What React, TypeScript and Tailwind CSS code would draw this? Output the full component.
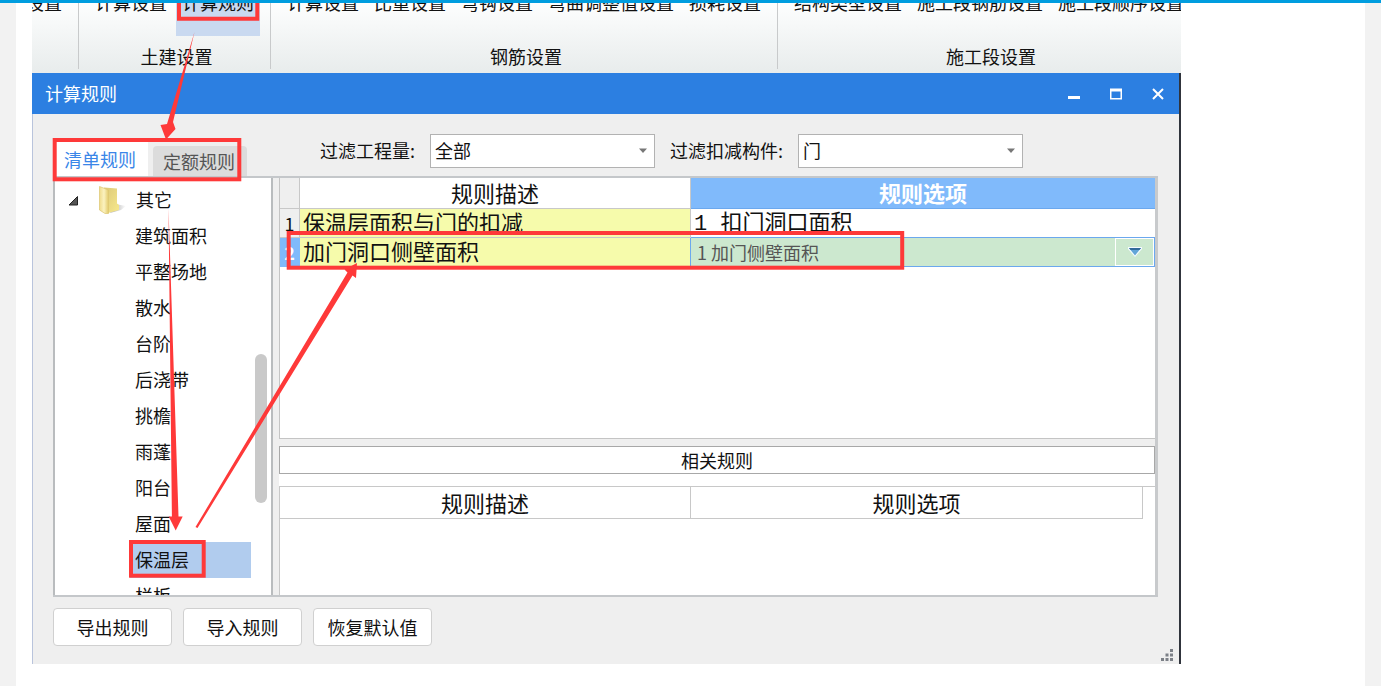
import { useState } from "react";

const ribbonGroups = [
  { label: "", items: ["设置"] },
  { label: "土建设置", items: ["计算设置", "计算规则"] },
  {
    label: "钢筋设置",
    items: ["计算设置", "比重设置", "弯钩设置", "弯曲调整值设置", "损耗设置"],
  },
  {
    label: "施工段设置",
    items: ["结构类型设置", "施工段钢筋设置", "施工段顺序设置"],
  },
];

const treeItems = [
  "建筑面积",
  "平整场地",
  "散水",
  "台阶",
  "后浇带",
  "挑檐",
  "雨蓬",
  "阳台",
  "屋面",
  "保温层",
  "栏板",
];

const Ribbon = () => (
  <div className="flex h-[70px] overflow-hidden bg-gradient-to-b from-[#fdfefe] to-[#e8ecec]">
    {ribbonGroups.map((group, index) => (
      <div
        key={index}
        className={`flex shrink-0 flex-col ${index === 0 ? "w-[47px]" : ""}`}
      >
        <div className="flex h-[66px]">
          <div className={index === 0 ? "-ml-3" : "px-[10px]"}>
            <div className="flex h-[33px] items-end gap-[3px] overflow-hidden">
              {group.items.map((item) => (
                <button
                  key={item}
                  type="button"
                  className={`flex h-[46px] shrink-0 items-start px-[6px] leading-6 whitespace-nowrap ${
                    item === "计算规则" ? "bg-[#c9d9f0]" : ""
                  }`}
                >
                  {item}
                </button>
              ))}
            </div>
            <div className="mt-2 pl-1 text-center leading-6">{group.label}</div>
          </div>
          {index < 3 && <div className="ml-auto w-px bg-[#c8cacb]" />}
        </div>
      </div>
    ))}
  </div>
);

const TitleBar = () => (
  <div className="flex h-[41px] items-center bg-[#2c7fe1] pl-[13px] text-white">
    <h1 className="flex-1 pb-[2px]">计算规则</h1>
    <button type="button" aria-label="最小化" className="flex h-full w-[42px] items-center justify-center">
      <svg width="12" height="12" viewBox="0 0 12 12">
        <path d="M0 8h12v3H0z" fill="white" />
      </svg>
    </button>
    <button type="button" aria-label="最大化" className="flex h-full w-[42px] items-center justify-center">
      <svg width="12" height="12" viewBox="0 0 12 12">
        <path d="M0 0.500h12v11H0zM1.500 3.500v6.500h9V3.500z" fill="white" fillRule="evenodd" />
      </svg>
    </button>
    <button type="button" aria-label="关闭" className="flex h-full w-[42px] items-center justify-center">
      <svg width="12" height="12" viewBox="0 0 12 12">
        <path d="M1 1l10 10M11 1L1 11" stroke="white" strokeWidth="2" />
      </svg>
    </button>
  </div>
);

const FilterSelect = ({ id, label, options }: { id: string; label: string; options: string[] }) => (
  <div className="flex items-center gap-[15px]">
    <label htmlFor={id} className="pb-[2px] whitespace-nowrap">
      {label}
    </label>
    <div className="relative">
      <select
        id={id}
        className="h-[34px] w-[225px] appearance-none border border-[#b2b2b2] bg-white pb-[2px] pl-1 outline-none"
      >
        {options.map((option) => (
          <option key={option}>{option}</option>
        ))}
      </select>
      <svg
        className="pointer-events-none absolute top-[14px] right-2"
        width="8"
        height="6"
        viewBox="0 0 8 6"
      >
        <path d="M0 0.500h8L4 5z" fill="#777" />
      </svg>
    </div>
  </div>
);

const FolderIcon = () => (
  <svg width="28" height="28" viewBox="0 0 28 28">
    <defs>
      <linearGradient id="folderFront" x1="0" y1="0" x2="1" y2="0">
        <stop offset="0" stopColor="#f0dc8c" />
        <stop offset="0.500" stopColor="#fbf2c0" />
        <stop offset="1" stopColor="#e2ca6a" />
      </linearGradient>
      <linearGradient id="folderBack" x1="0" y1="0" x2="1" y2="1">
        <stop offset="0" stopColor="#dcc878" />
        <stop offset="1" stopColor="#f7e98c" />
      </linearGradient>
      <linearGradient id="folderShadow" x1="0" y1="0" x2="1" y2="0">
        <stop offset="0.300" stopColor="#bdbdbd" />
        <stop offset="1" stopColor="#ffffff" />
      </linearGradient>
    </defs>
    <path d="M17 18l11 2-5 4-11 3z" fill="url(#folderShadow)" />
    <path d="M6 1.500l13 1v15l2 1.500v5L10 27z" fill="url(#folderBack)" />
    <path d="M1.500 0.500L10.500 4v23.500L7 27.500 1.500 24z" fill="url(#folderFront)" stroke="#dcc670" strokeWidth="0.700" />
  </svg>
);

const RuleTree = () => {
  const [selected, setSelected] = useState("保温层");

  return (
    <div className="flex w-[220px] shrink-0 overflow-hidden border-x-2 border-[#b9bcbe] bg-white">
      <div className="flex-1 pt-1">
        <div className="flex h-9 items-center pl-[13px]">
          <svg width="11" height="11" viewBox="0 0 11 11">
            <path d="M9.500 1.500v8.500H1z" fill="#555" stroke="#222" />
          </svg>
          <div className="mr-[10px] ml-[19px]">
            <FolderIcon />
          </div>
          <span className="pb-[2px]">其它</span>
        </div>
        <ul className="pl-[75px]">
          {treeItems.map((item) => (
            <li key={item}>
              <button
                type="button"
                onClick={() => setSelected(item)}
                className={`h-9 w-full px-[5px] pb-[2px] text-left ${
                  selected === item ? "bg-[#b1ccee]" : ""
                }`}
              >
                {item}
              </button>
            </li>
          ))}
        </ul>
      </div>
      <div className="w-5 px-1 pt-44">
        <div className="h-[149px] rounded-full bg-[#c9c9c9]" />
      </div>
    </div>
  );
};

const RuleTable = () => (
  <div className="h-[261px] border-b border-l border-[#c4c4c4] bg-white">
    <table className="w-full table-fixed border-separate border-spacing-0 text-[22px] leading-6">
      <colgroup>
        <col className="w-5" />
        <col className="w-[391px]" />
        <col />
      </colgroup>
      <thead>
        <tr className="h-[31px]">
          <th className="border-r border-b border-[#c8c8c8] bg-[#efefef] p-0" />
          <th className="border-r border-b border-[#c8c8c8] p-0 pb-[2px] font-normal">规则描述</th>
          <th className="border-b border-[#6ba8ee] bg-[#80bafb] p-0 pb-[2px] font-bold text-white">
            规则选项
          </th>
        </tr>
      </thead>
      <tbody>
        <tr className="h-[29px]">
          <td className="border-r border-b border-[#c8c8c8] bg-[#efefef] p-0 text-center text-[18px]">1</td>
          <td className="border-r border-b border-[#c8c8c8] bg-[#f6fbab] p-0 pb-1 pl-[3px]">
            保温层面积与门的扣减
          </td>
          <td className="border-b border-[#6ba8ee] p-0 pt-1 pl-[3px] font-['Liberation_Mono','Noto_Sans_CJK_SC',monospace] leading-5">
            1 扣门洞口面积
          </td>
        </tr>
        <tr className="h-[29px]">
          <td className="border-r border-b border-[#80bafb] bg-[#80bafb] p-0 text-center text-[18px] font-bold text-white">
            2
          </td>
          <td className="border-r border-b border-[#c8c8c8] border-r-[#6ba8ee] bg-[#f6fbab] p-0 pb-1 pl-[3px]">
            加门洞口侧壁面积
          </td>
          <td className="border-r border-b border-[#6ba8ee] bg-[#cce8cf] p-0">
            <div className="relative h-7">
              <select
                aria-label="加门洞口侧壁面积"
                className="block h-full w-full appearance-none bg-transparent pl-[6px] text-[18px] text-[#555] outline-none"
              >
                <option>1 加门侧壁面积</option>
              </select>
              <div className="pointer-events-none absolute top-0 right-0 flex h-7 w-[39px] items-center justify-center border border-white">
                <svg width="14" height="10" viewBox="0 0 14 10">
                  <path d="M0 0h14v2L7 10 0 2z" fill="#f4fbff" />
                  <path d="M1 1h12L7 8.500z" fill="#62a5d8" />
                  <path d="M1 1h12l-1.500 2h-9z" fill="#326a9c" />
                </svg>
              </div>
            </div>
          </td>
        </tr>
      </tbody>
    </table>
  </div>
);

const RelatedRules = () => (
  <div className="flex flex-1 flex-col bg-white">
    <div className="bg-[#efefef] pt-[7px]">
      <h2 className="h-7 border border-[#a8a8a8] bg-white text-center leading-[26px]">相关规则</h2>
    </div>
    <div className="mt-3 flex-1 border-t border-l border-[#c8c8c8] pr-3">
      <table className="w-full table-fixed border-separate border-spacing-0 text-[22px] leading-6">
        <colgroup>
          <col className="w-[411px]" />
          <col />
        </colgroup>
        <thead>
          <tr className="h-8">
            <th className="border-r border-b border-[#c8c8c8] p-0 pb-[2px] font-normal">规则描述</th>
            <th className="border-r border-b border-[#c8c8c8] p-0 pb-[2px] font-normal">规则选项</th>
          </tr>
        </thead>
      </table>
    </div>
  </div>
);

// Red boxes and arrows that walk through the steps
const Annotations = () => (
  <svg
    className="pointer-events-none absolute top-0 left-0"
    width="1149"
    height="661"
    viewBox="32 3 1149 661"
  >
    <g fill="none" stroke="#fe3939" strokeWidth="4">
      <path d="M179 0v18.700h78.300V0" />
      <rect x="54.700" y="140" width="184.600" height="39.300" />
      <rect x="288.700" y="233" width="613.500" height="34.700" />
      <rect x="131" y="542" width="72.700" height="33.700" />
    </g>
    <g fill="#fe3939">
      <path d="M194.500 32L173 122l2.500 7L166 139.500l-5.500-14.500 6.500-1z" />
      <path d="M168.500 208L178.500 516.500h4.200L175.700 530.500l-7-14h3.200z" />
      <path d="M195.500 527L347.500 272.500l-3-3L357 263l-1 15-3.500-2.500L197.500 528z" />
    </g>
  </svg>
);

const App = () => {
  const [tab, setTab] = useState("清单规则");

  return (
    <div className="flex min-h-screen flex-col border-t-[3px] border-[#009ddf] bg-[#f2f2f2] px-4 font-['Noto_Sans_CJK_SC',sans-serif] text-[18px] leading-6 text-[#111]">
      <div className="flex-1 bg-white px-4">
        <div className="relative w-full max-w-[1149px] overflow-hidden">
          <Ribbon />
          <div className="border-r-2 border-[#30343c]">
            <TitleBar />
            <div className="border-l border-[#b9c4dc] bg-[#efefef]">
              <div className="flex h-[62px] items-end pl-[21px]">
                <div role="tablist" className="flex items-end gap-[5px]">
                  {["清单规则", "定额规则"].map((name) => (
                    <button
                      key={name}
                      type="button"
                      role="tab"
                      aria-selected={tab === name}
                      onClick={() => setTab(name)}
                      className={`w-[94px] pr-[2px] ${
                        tab === name
                          ? "h-[34px] bg-white text-[#3a86e8]"
                          : "h-[30px] rounded-t bg-[#dcdcdc] text-[#555]"
                      }`}
                    >
                      {name}
                    </button>
                  ))}
                </div>
                <div className="mb-2 ml-[73px] flex gap-[15px]">
                  <FilterSelect id="quantity" label="过滤工程量:" options={["全部"]} />
                  <FilterSelect id="component" label="过滤扣减构件:" options={["门"]} />
                </div>
              </div>
              <div className="mr-[21px] ml-5 flex h-[421px] border-y-2 border-[#c4c7ca]">
                <RuleTree />
                <div className="ml-[6px] flex flex-1 flex-col border-r-[3px] border-[#c8cacc]">
                  <RuleTable />
                  <RelatedRules />
                </div>
              </div>
              <div className="flex pl-5">
                <div className="flex gap-[11px] pt-[11px] pb-[18px]">
                  {["导出规则", "导入规则", "恢复默认值"].map((name) => (
                    <button
                      key={name}
                      type="button"
                      className="h-[38px] w-[119px] rounded border border-[#d0d0d0] bg-white"
                    >
                      {name}
                    </button>
                  ))}
                </div>
                <svg
                  className="mr-[6px] mb-[3px] ml-auto self-end"
                  width="12"
                  height="12"
                  viewBox="0 0 12 12"
                >
                  <path
                    d="M9 0h3v3H9zM4.500 4.500h3v3h-3zM9 4.500h3v3H9zM0 9h3v3H0zM4.500 9h3v3h-3zM9 9h3v3H9z"
                    fill="#7c8087"
                  />
                </svg>
              </div>
            </div>
          </div>
          <Annotations />
        </div>
      </div>
    </div>
  );
};

export default App;
